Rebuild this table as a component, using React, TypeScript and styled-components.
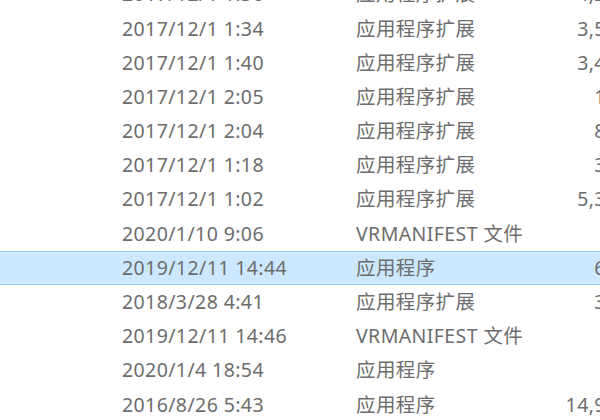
import React from "react";
import styled, { createGlobalStyle } from "styled-components";

const Global = createGlobalStyle`
  html, body { margin: 0; padding: 0; background: #ffffff; }
  body { width: 600px; height: 420px; overflow: hidden; }
`;

const Viewport = styled.div`
  width: 600px;
  height: 420px;
  overflow: hidden;
  background: #ffffff;
`;

const List = styled.div`
  width: 660px;
  margin-top: -23px;
  display: flex;
  flex-direction: column;
  font-family: "Noto Sans", "Noto Sans CJK SC", sans-serif;
  font-size: 19.5px;
  letter-spacing: 0.4px;
  color: #6d6d6d;
`;

const Row = styled.div<{ $selected?: boolean }>`
  box-sizing: border-box;
  height: 34.2px;
  display: grid;
  grid-template-columns: 122px 234px 1fr 120px;
  align-items: center;
  background: ${(p) => (p.$selected ? "#cce8ff" : "transparent")};
  border-top: 1px solid ${(p) => (p.$selected ? "#99d1ff" : "transparent")};
  border-bottom: 1px solid ${(p) => (p.$selected ? "#99d1ff" : "transparent")};
`;

const Cell = styled.div<{ $right?: boolean }>`
  white-space: nowrap;
  line-height: 1;
  text-align: ${(p) => (p.$right ? "right" : "left")};
`;

type Item = { date: string; type: string; size: string; selected?: boolean };

const items: Item[] = [
  { date: "2017/12/1 1:36", type: "应用程序扩展", size: "4,215 KB" },
  { date: "2017/12/1 1:34", type: "应用程序扩展", size: "3,512 KB" },
  { date: "2017/12/1 1:40", type: "应用程序扩展", size: "3,468 KB" },
  { date: "2017/12/1 2:05", type: "应用程序扩展", size: "126 KB" },
  { date: "2017/12/1 2:04", type: "应用程序扩展", size: "842 KB" },
  { date: "2017/12/1 1:18", type: "应用程序扩展", size: "357 KB" },
  { date: "2017/12/1 1:02", type: "应用程序扩展", size: "5,376 KB" },
  { date: "2020/1/10 9:06", type: "VRMANIFEST 文件", size: "1 KB" },
  { date: "2019/12/11 14:44", type: "应用程序", size: "654 KB", selected: true },
  { date: "2018/3/28 4:41", type: "应用程序扩展", size: "318 KB" },
  { date: "2019/12/11 14:46", type: "VRMANIFEST 文件", size: "1 KB" },
  { date: "2020/1/4 18:54", type: "应用程序", size: "9 KB" },
  { date: "2016/8/26 5:43", type: "应用程序", size: "14,958 KB" },
];

export default function App() {
  return (
    <Viewport>
      <Global />
      <List>
        {items.map((it, i) => (
          <Row key={i} $selected={it.selected}>
            <Cell />
            <Cell>{it.date}</Cell>
            <Cell>{it.type}</Cell>
            <Cell $right>{it.size}</Cell>
          </Row>
        ))}
      </List>
    </Viewport>
  );
}
